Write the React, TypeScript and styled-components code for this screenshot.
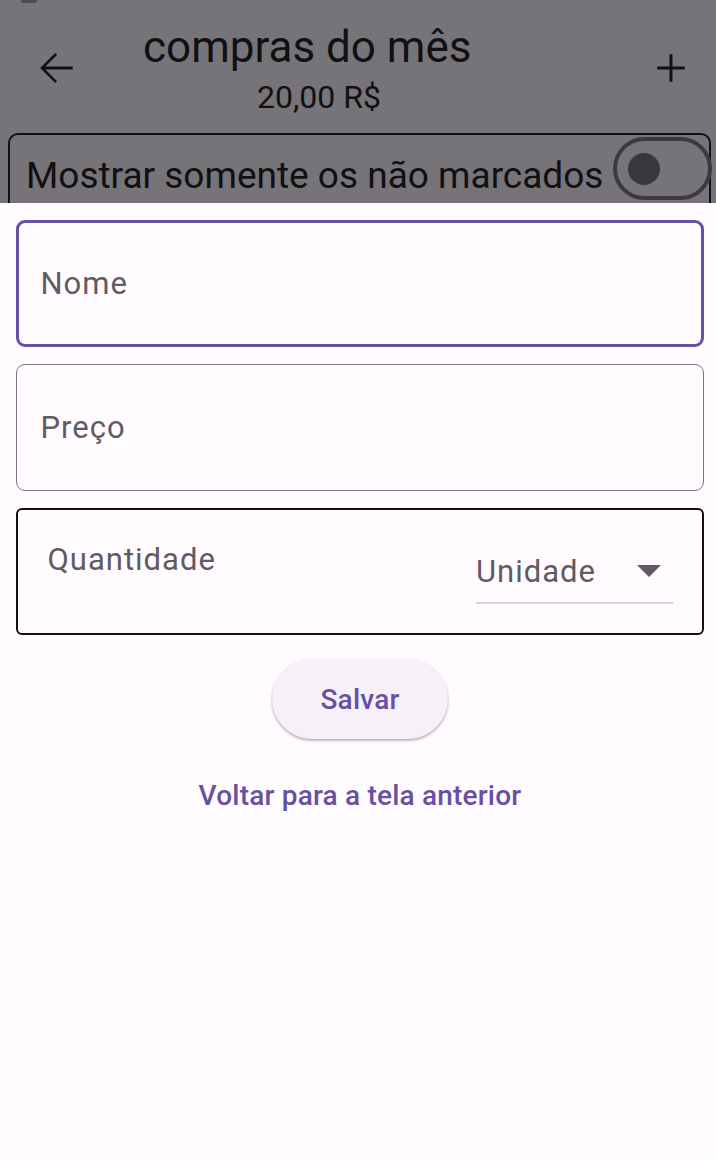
import React from "react";
import styled, { createGlobalStyle } from "styled-components";

const Global = createGlobalStyle`
  html, body { margin: 0; padding: 0; background: #fffbfe; }
  body { font-family: Roboto, "Noto Sans", Arial, sans-serif; }
  * { box-sizing: border-box; }
`;

const Page = styled.div`
  width: 716px;
  height: 1159px;
  display: flex;
  flex-direction: column;
  background: #fffbfe;
  overflow: hidden;
`;

const Dimmed = styled.header`
  height: 203px;
  flex: none;
  background: #767478;
  overflow: hidden;
  display: flex;
  flex-direction: column;
`;

const StatusStub = styled.div`
  width: 16px;
  height: 3px;
  flex: none;
  margin-left: 21px;
  background: #4d4b4f;
  border-radius: 0 0 2px 2px;
`;

const AppBar = styled.div`
  height: 130px;
  flex: none;
  display: flex;
  align-items: flex-start;
  padding: 19px 20px 0 31px;
`;

const IconSlot = styled.div`
  width: 50px;
  height: 50px;
  margin-top: 21px;
  display: flex;
  align-items: center;
  justify-content: center;
  flex: none;
`;

const TitleBlock = styled.div`
  flex: 1;
  display: flex;
  flex-direction: column;
  align-items: flex-start;
  padding-left: 62px;
`;

const Title = styled.div`
  font-size: 44px;
  line-height: 50px;
  color: #111012;
  white-space: nowrap;
`;

const Subtitle = styled.div`
  font-size: 32px;
  line-height: 50px;
  color: #111012;
  margin-left: 114px;
`;

const FilterCard = styled.div`
  margin: 0 5px 0 8px;
  height: 84px;
  flex: none;
  border: 2px solid #111012;
  border-radius: 10px;
  display: flex;
  align-items: center;
  padding-left: 16px;
  gap: 10px;
`;

const FilterText = styled.span`
  font-size: 37px;
  color: #111012;
  white-space: nowrap;
`;

const SwitchTrack = styled.div`
  width: 99px;
  height: 63px;
  flex: none;
  margin-bottom: 13px;
  border: 4px solid #3d3a3f;
  border-radius: 32px;
  display: flex;
  align-items: center;
  padding-left: 11px;
`;

const SwitchThumb = styled.div`
  width: 32px;
  height: 32px;
  border-radius: 50%;
  background: #3a373c;
`;

const Sheet = styled.main`
  flex: 1;
  display: flex;
  flex-direction: column;
  padding: 17px 12px 0 16px;
`;

const Field = styled.div<{ $variant: "focused" | "idle" | "plain" }>`
  height: 127px;
  flex: none;
  display: flex;
  align-items: center;
  border-radius: ${(p) => (p.$variant === "plain" ? "6px" : "9px")};
  border: ${(p) =>
    p.$variant === "focused"
      ? "3.5px solid #6750a4"
      : p.$variant === "idle"
      ? "1.5px solid #79747e"
      : "2px solid #111012"};
  padding-left: ${(p) => (p.$variant === "focused" ? "21.5px" : "23.5px")};
  & + & {
    margin-top: 17px;
  }
`;

const Label = styled.span`
  font-size: 31px;
  letter-spacing: 1px;
  color: #605b63;
`;

const QtyRow = styled.div`
  flex: 1;
  display: flex;
  align-items: center;
  padding: 0 29px 0 6px;
`;

const QtyLabel = styled(Label)`
  flex: 1;
  margin-top: -25px;
`;

const Dropdown = styled.div`
  width: 197px;
  height: 64px;
  margin-top: 1px;
  display: flex;
  align-items: center;
  justify-content: space-between;
  border-bottom: 2px solid #d7d3da;
  padding-right: 12px;
`;

const Actions = styled.div`
  display: flex;
  flex-direction: column;
  align-items: center;
  padding-top: 24px;
`;

const FilledTonal = styled.button`
  width: 176px;
  height: 80px;
  border: none;
  border-radius: 40px;
  background: #f6f0f9;
  box-shadow: 0 2px 3px rgba(0, 0, 0, 0.22), 0 1px 2px rgba(0, 0, 0, 0.12);
  font-family: Roboto, sans-serif;
  font-weight: 500;
  font-size: 28px;
  letter-spacing: 0.2px;
  color: #6750a4;
  padding: 0;
`;

const TextLink = styled.button`
  margin-top: 16px;
  height: 80px;
  border: none;
  background: transparent;
  font-family: Roboto, sans-serif;
  font-weight: 500;
  font-size: 28px;
  letter-spacing: 0.2px;
  color: #6750a4;
  padding: 0 24px;
`;

export default function App() {
  return (
    <Page>
      <Global />
      <Dimmed>
        <StatusStub />
        <AppBar>
          <IconSlot>
            <svg width="50" height="50" viewBox="0 0 24 24">
              <path
                d="M20 11.3H6.9l5.6-5.6-.9-.9L4.4 12l7.2 7.2.9-.9-5.6-5.6H20v-1.4z"
                fill="#111012"
              />
            </svg>
          </IconSlot>
          <TitleBlock>
            <Title>compras do mês</Title>
            <Subtitle>20,00 R$</Subtitle>
          </TitleBlock>
          <IconSlot>
            <svg width="50" height="50" viewBox="0 0 24 24">
              <path
                d="M18.6 12.7h-5.9v5.9h-1.4v-5.9H5.4v-1.4h5.9V5.4h1.4v5.9h5.9v1.4z"
                fill="#111012"
              />
            </svg>
          </IconSlot>
        </AppBar>
        <FilterCard>
          <FilterText>Mostrar somente os não marcados</FilterText>
          <SwitchTrack>
            <SwitchThumb />
          </SwitchTrack>
        </FilterCard>
      </Dimmed>
      <Sheet>
        <Field $variant="focused">
          <Label>Nome</Label>
        </Field>
        <Field $variant="idle">
          <Label>Preço</Label>
        </Field>
        <Field $variant="plain">
          <QtyRow>
            <QtyLabel>Quantidade</QtyLabel>
            <Dropdown>
              <Label>Unidade</Label>
              <svg width="24" height="12" viewBox="0 0 24 12">
                <path d="M0 0h24L12 12z" fill="#605b63" />
              </svg>
            </Dropdown>
          </QtyRow>
        </Field>
        <Actions>
          <FilledTonal>Salvar</FilledTonal>
          <TextLink>Voltar para a tela anterior</TextLink>
        </Actions>
      </Sheet>
    </Page>
  );
}
